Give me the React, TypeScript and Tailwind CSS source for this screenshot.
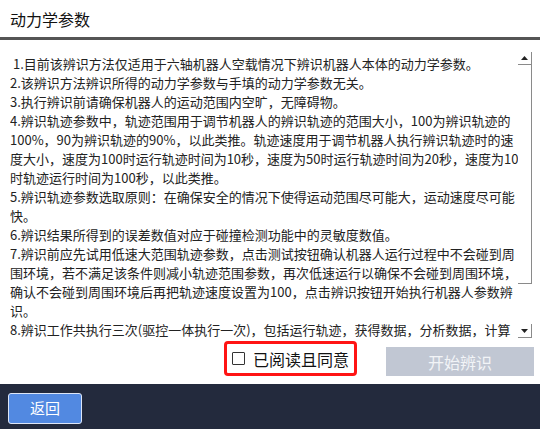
const lines = [
  " 1.目前该辨识方法仅适用于六轴机器人空载情况下辨识机器人本体的动力学参数。",
  "2.该辨识方法辨识所得的动力学参数与手填的动力学参数无关。",
  "3.执行辨识前请确保机器人的运动范围内空旷，无障碍物。",
  "4.辨识轨迹参数中，轨迹范围用于调节机器人的辨识轨迹的范围大小，100为辨识轨迹的",
  "100%，90为辨识轨迹的90%，以此类推。轨迹速度用于调节机器人执行辨识轨迹时的速",
  "度大小，速度为100时运行轨迹时间为10秒，速度为50时运行轨迹时间为20秒，速度为10",
  "时轨迹运行时间为100秒，以此类推。",
  "5.辨识轨迹参数选取原则：在确保安全的情况下使得运动范围尽可能大，运动速度尽可能",
  "快。",
  "6.辨识结果所得到的误差数值对应于碰撞检测功能中的灵敏度数值。",
  "7.辨识前应先试用低速大范围轨迹参数，点击测试按钮确认机器人运行过程中不会碰到周",
  "围环境，若不满足该条件则减小轨迹范围参数，再次低速运行以确保不会碰到周围环境，",
  "确认不会碰到周围环境后再把轨迹速度设置为100，点击辨识按钮开始执行机器人参数辨",
  "识。",
  "8.辨识工作共执行三次(驱控一体执行一次)，包括运行轨迹，获得数据，分析数据，计算",
];

function ScrollBar() {
  return (
    <div className="w-[14px] flex flex-col pt-[1px]">
      {/* up button */}
      <div className="h-[13px] flex items-center justify-center border-r border-b border-[#8a8a8a]">
        <svg width="7" height="4" viewBox="0 0 7 4">
          <path d="M3.5 0 L7 4 L0 4 Z" fill="#222" />
        </svg>
      </div>
      {/* thumb */}
      <div className="h-[219px] border-r border-b border-[#8a8a8a]" />
      <div className="flex-1" />
      {/* down button */}
      <div className="h-[14px] flex items-center justify-center border-r border-b border-[#8a8a8a] mb-[3px]">
        <svg width="7" height="4" viewBox="0 0 7 4">
          <path d="M0 0 L7 0 L3.5 4 Z" fill="#222" />
        </svg>
      </div>
    </div>
  );
}

export default function App() {
  return (
    <div
      className="w-[540px] h-[429px] flex flex-col bg-white overflow-hidden"
      style={{ fontFamily: '"Noto Sans CJK SC", "Noto Sans", sans-serif' }}
    >
      <div className="h-[40px] px-[10px] flex items-center border-b-[3px] border-[#555] text-[16px] text-[#111]">
        动力学参数
      </div>

      <div className="mt-[11px] h-[290px] flex pl-[10px] pr-[8px]">
        <div className="flex-1 pt-[3px] overflow-hidden text-[13px] leading-[19px] text-[#222]">
          {lines.map((l, i) => (
            <div key={i} className="whitespace-pre">
              {l}
            </div>
          ))}
        </div>
        <ScrollBar />
      </div>

      <div className="flex items-end pl-[224px] pr-[6px] gap-[29px]">
        <label className="h-[35px] flex items-center gap-[8px] px-[5px] border-[3px] border-[#ff1414] rounded-[4px] text-[16px] text-[#111]">
          <span className="w-[13px] h-[13px] border-[1.5px] border-[#333] rounded-[1px]" />
          已阅读且同意
        </label>
        <button className="flex-1 h-[29px] bg-[#c1c7d3] text-[#f2f4f7] text-[16px]">
          开始辨识
        </button>
      </div>

      <div className="mt-[8px] flex-1 bg-[#232a3d] px-[8px] pt-[9px]">
        <button className="w-[74px] h-[31px] bg-[#5289e1] border border-[#dde6f7] rounded-[3px] text-white text-[15px]">
          返回
        </button>
      </div>
    </div>
  );
}
